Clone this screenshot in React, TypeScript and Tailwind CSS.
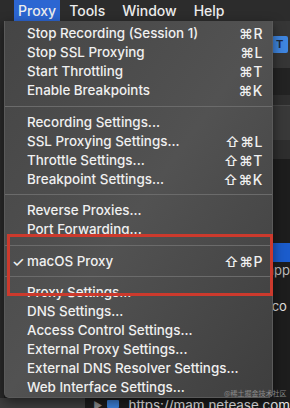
type Item = { label: string; keys?: string; checked?: boolean } | "sep";

const menuItems: Item[] = [
  { label: "Stop Recording (Session 1)", keys: "⌘R" },
  { label: "Stop SSL Proxying", keys: "⌘L" },
  { label: "Start Throttling", keys: "⌘T" },
  { label: "Enable Breakpoints", keys: "⌘K" },
  "sep",
  { label: "Recording Settings..." },
  { label: "SSL Proxying Settings...", keys: "⇧⌘L" },
  { label: "Throttle Settings...", keys: "⇧⌘T" },
  { label: "Breakpoint Settings...", keys: "⇧⌘K" },
  "sep",
  { label: "Reverse Proxies..." },
  { label: "Port Forwarding..." },
  "sep",
  { label: "macOS Proxy", keys: "⇧⌘P", checked: true },
  "sep",
  { label: "Proxy Settings..." },
  { label: "DNS Settings..." },
  { label: "Access Control Settings..." },
  { label: "External Proxy Settings..." },
  { label: "External DNS Resolver Settings..." },
  { label: "Web Interface Settings..." },
];

const font = { fontFamily: "Inter, 'DejaVu Sans', sans-serif" };

function MenuBar() {
  return (
    <div className="flex h-[21px] items-stretch bg-[#2c2c2c] text-[14px] font-medium text-[#ededed]">
      <div className="w-[14px]" />
      <div className="flex items-center bg-[#2c66d2] px-[4px]">Proxy</div>
      <div className="ml-[9px] flex items-center">Tools</div>
      <div className="ml-[17px] flex items-center">Window</div>
      <div className="ml-[17px] flex items-center">Help</div>
    </div>
  );
}

function Backdrop() {
  return (
    <div className="flex h-[387px] flex-col">
      <div className="flex flex-1">
        <div className="w-[4px] bg-[#2a2a2a]" />
        <div className="w-[269px]" />
        <div className="flex flex-1 flex-col border-l border-[#555]">
          <div className="flex h-[47px] items-center bg-[#363636] pl-[2px]">
            <div className="flex h-[17px] w-[16px] items-center justify-center rounded-[2px] bg-[#3f86e0] text-[11px] font-bold text-[#1d2a40]">
              T
            </div>
          </div>
          <div className="h-[27px] bg-[#232323]" />
          <div className="h-[11px] border-b border-[#474747] bg-[#2f2f2f]" />
          <div className="h-[34px] bg-[#393939]" />
          <div className="h-[19px] bg-[#2e2e2e]" />
          <div className="h-[84px] bg-[#1d1d1d]" />
          <div className="h-[19px] bg-[#1b5ccc]" />
          <div className="flex flex-1 flex-col bg-[#1d1d1d] text-[13px] leading-[16px] text-[#bdbdbd]">
            <span className="-ml-[3px]">app</span>
            <span className="mt-[20px] -ml-[5px] text-[#e0e0e0]">l.co</span>
          </div>
        </div>
      </div>
      <div className="flex h-[10px] items-start bg-[#1c1c1c]">
        <div className="h-full w-[92px] bg-[#3e3e3e]" />
        <div className="ml-[8px] mt-[2px] text-[10px] leading-[10px] text-[#888]">▶</div>
        <div className="ml-[5px] mt-[2px] h-[8px] w-[13px] rounded-[1px] bg-[#3b7fd6]" />
        <div className="ml-[9px] whitespace-nowrap text-[13.4px] leading-[14px] text-[#e6e6e6]">https://mam.netease.com</div>
      </div>
    </div>
  );
}

function Menu() {
  return (
    <div className="absolute left-[4px] top-[21px] flex h-[377px] w-[269px] flex-col rounded-b-[5px] border border-t-0 border-[#5a5a5a] bg-gradient-to-br from-[#454545] via-[#525252] to-[#3e3e3e] pt-[3px] text-[13.4px] font-medium text-[#f0f0f0] shadow-[0_4px_12px_rgba(0,0,0,0.5)]">
      {menuItems.map((item, i) =>
        item === "sep" ? (
          <div key={i} className="flex h-[12.5px] items-center">
            <div className="h-px w-full bg-[#6b6b6b]" />
          </div>
        ) : (
          <div key={i} className="flex h-[19px] items-center pl-[7px] pr-[9px] leading-[19px]">
            <span className="w-[15px] text-[14px]">{item.checked ? "✓" : ""}</span>
            <span className="flex-1 whitespace-nowrap">{item.label}</span>
            {item.keys ? <span className="whitespace-nowrap text-[14px] tracking-[0.5px]">{item.keys}</span> : null}
          </div>
        ),
      )}
    </div>
  );
}

export default function App() {
  return (
    <div className="relative h-[408px] w-[290px] overflow-hidden bg-[#1c1c1c]" style={font}>
      <MenuBar />
      <Backdrop />
      <Menu />
      <div className="absolute left-[7px] top-[234px] h-[62px] w-[266px] border-[3.5px] border-[#cc3a2d]" />
      <div className="absolute left-[224px] top-[389px] text-[7px] leading-[8px] text-[#8a8a8a]" style={{ fontFamily: "'Noto Sans CJK SC', sans-serif" }}>
        @稀土掘金技术社区
      </div>
    </div>
  );
}
